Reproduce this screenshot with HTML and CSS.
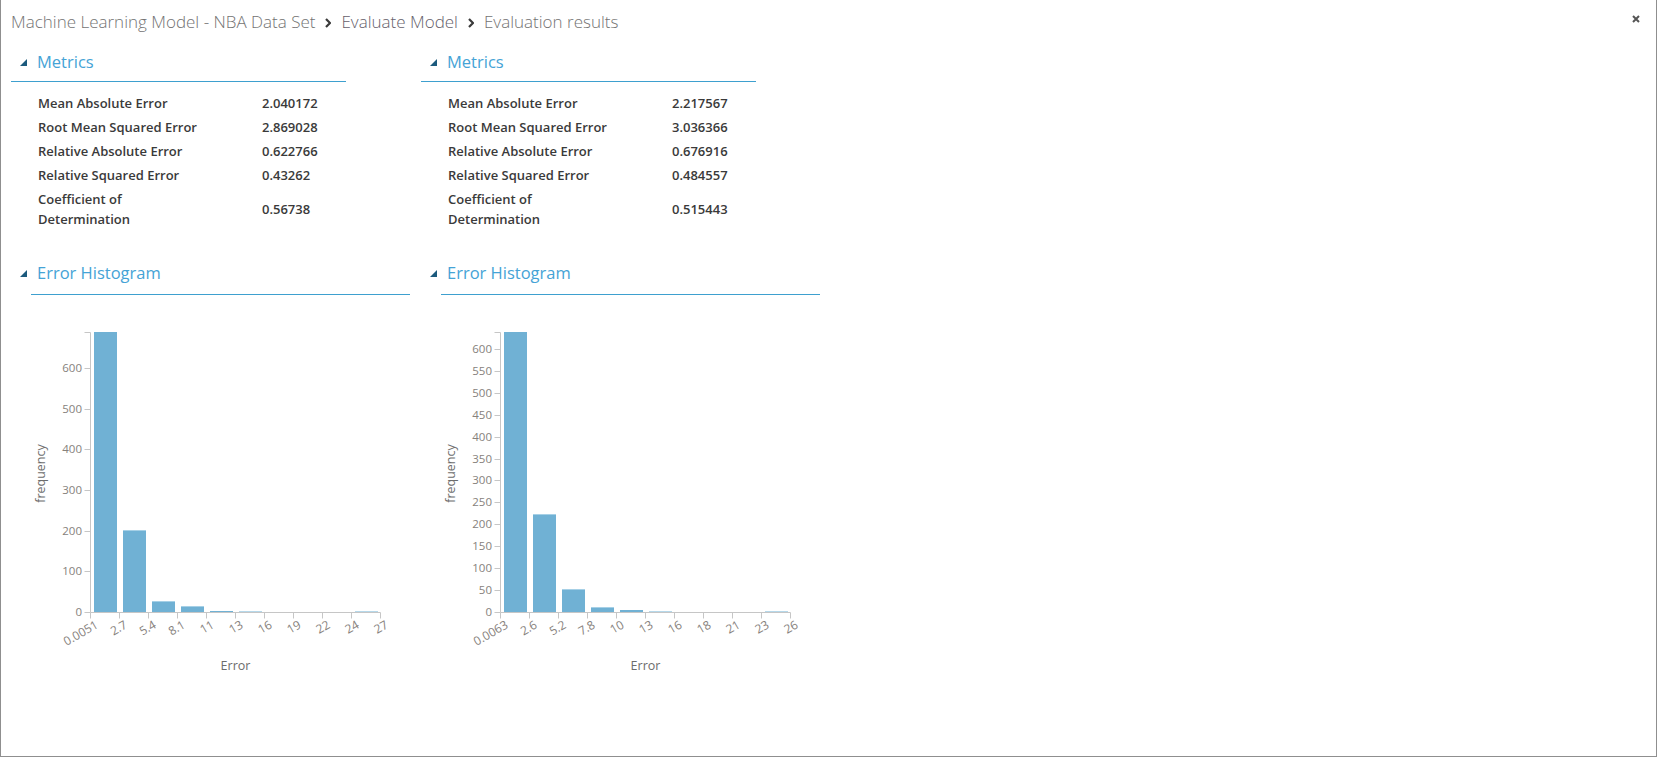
FILE: index.html
```html
<!DOCTYPE html>
<html lang="en">
<head>
<meta charset="utf-8">
<title>Evaluation results</title>
<link rel="stylesheet" href="styles.css">
</head>
<body>
<header class="titlebar">
  <nav class="crumbs">
    <span class="crumb">Machine Learning Model - NBA Data Set</span>
    <svg class="chev" width="6" height="10" viewBox="0 0 6 10"><path d="M1 1 L5 5 L1 9" /></svg>
    <span class="crumb link">Evaluate Model</span>
    <svg class="chev" width="6" height="10" viewBox="0 0 6 10"><path d="M1 1 L5 5 L1 9" /></svg>
    <span class="crumb current">Evaluation results</span>
  </nav>
  <button class="close" aria-label="Close">
    <svg width="8" height="8" viewBox="0 0 8 8"><path d="M1 1 L7 7 M7 1 L1 7" /></svg>
  </button>
</header>

<main class="panels">
  <section class="panel">
    <div class="sec-head metrics-head">
      <svg class="tri" width="7" height="7" viewBox="0 0 7 7"><path d="M7 0 L7 7 L0 7 Z"/></svg>
      <span class="sec-title">Metrics</span>
    </div>
    <dl class="metrics">
      <dt>Mean Absolute Error</dt><dd>2.040172</dd>
      <dt>Root Mean Squared Error</dt><dd>2.869028</dd>
      <dt>Relative Absolute Error</dt><dd>0.622766</dd>
      <dt>Relative Squared Error</dt><dd>0.43262</dd>
      <dt>Coefficient of Determination</dt><dd>0.56738</dd>
    </dl>
    <div class="sec-head hist-head">
      <svg class="tri" width="7" height="7" viewBox="0 0 7 7"><path d="M7 0 L7 7 L0 7 Z"/></svg>
      <span class="sec-title">Error Histogram</span>
    </div>
    <svg class="chart" width="410" height="390" viewBox="0 0 410 390">
      <g class="bars">
        <rect x="94" y="37" width="23" height="280"/>
        <rect x="123" y="235" width="23" height="82"/>
        <rect x="152" y="306" width="23" height="11"/>
        <rect x="181" y="311" width="23" height="6"/>
        <rect x="210" y="316" width="23" height="1"/>
        <rect class="faint" x="239" y="316" width="23" height="1"/>
        <rect class="faint" x="355" y="316" width="23" height="1"/>
      </g>
      <g class="bar-tops">
        <rect x="123" y="235" width="23" height="1"/>
        <rect x="152" y="306" width="23" height="1"/>
        <rect x="181" y="311" width="23" height="1"/>
      </g>
      <path class="axis" d="M84.5 37.5 H90.5 V317.5 H84.5"/>
      <path class="axis" d="M90.5 323.5 V317.5 H380.5 V323.5"/>
      <g class="axis">
        <path d="M84.5 276.5 H90.5 M84.5 236.5 H90.5 M84.5 195.5 H90.5 M84.5 154.5 H90.5 M84.5 114.5 H90.5 M84.5 73.5 H90.5"/>
        <path d="M119.5 317.5 V323.5 M148.5 317.5 V323.5 M177.5 317.5 V323.5 M206.5 317.5 V323.5 M235.5 317.5 V323.5 M264.5 317.5 V323.5 M293.5 317.5 V323.5 M322.5 317.5 V323.5 M351.5 317.5 V323.5"/>
      </g>
      <g class="ylabels">
        <text x="82" y="317.5" dy="0.34em">0</text>
        <text x="82" y="276.5" dy="0.34em">100</text>
        <text x="82" y="236.5" dy="0.34em">200</text>
        <text x="82" y="195.5" dy="0.34em">300</text>
        <text x="82" y="154.5" dy="0.34em">400</text>
        <text x="82" y="114.5" dy="0.34em">500</text>
        <text x="82" y="73.5" dy="0.34em">600</text>
      </g>
      <g class="xlabels">
        <text transform="translate(90.5 317.5) rotate(-30)" y="17">0.0051</text>
        <text transform="translate(119.5 317.5) rotate(-30)" y="17">2.7</text>
        <text transform="translate(148.5 317.5) rotate(-30)" y="17">5.4</text>
        <text transform="translate(177.5 317.5) rotate(-30)" y="17">8.1</text>
        <text transform="translate(206.5 317.5) rotate(-30)" y="17">11</text>
        <text transform="translate(235.5 317.5) rotate(-30)" y="17">13</text>
        <text transform="translate(264.5 317.5) rotate(-30)" y="17">16</text>
        <text transform="translate(293.5 317.5) rotate(-30)" y="17">19</text>
        <text transform="translate(322.5 317.5) rotate(-30)" y="17">22</text>
        <text transform="translate(351.5 317.5) rotate(-30)" y="17">24</text>
        <text transform="translate(380.5 317.5) rotate(-30)" y="17">27</text>
      </g>
      <text class="axis-title" x="235.5" y="375" text-anchor="middle">Error</text>
      <text class="axis-title" transform="translate(45 178.5) rotate(-90)" text-anchor="middle">frequency</text>
    </svg>
  </section>

  <section class="panel">
    <div class="sec-head metrics-head">
      <svg class="tri" width="7" height="7" viewBox="0 0 7 7"><path d="M7 0 L7 7 L0 7 Z"/></svg>
      <span class="sec-title">Metrics</span>
    </div>
    <dl class="metrics">
      <dt>Mean Absolute Error</dt><dd>2.217567</dd>
      <dt>Root Mean Squared Error</dt><dd>3.036366</dd>
      <dt>Relative Absolute Error</dt><dd>0.676916</dd>
      <dt>Relative Squared Error</dt><dd>0.484557</dd>
      <dt>Coefficient of Determination</dt><dd>0.515443</dd>
    </dl>
    <div class="sec-head hist-head">
      <svg class="tri" width="7" height="7" viewBox="0 0 7 7"><path d="M7 0 L7 7 L0 7 Z"/></svg>
      <span class="sec-title">Error Histogram</span>
    </div>
    <svg class="chart" width="410" height="390" viewBox="0 0 410 390">
      <g class="bars">
        <rect x="94" y="37" width="23" height="280"/>
        <rect x="123" y="219" width="23" height="98"/>
        <rect x="152" y="294" width="23" height="23"/>
        <rect x="181" y="312" width="23" height="5"/>
        <rect x="210" y="315" width="23" height="2"/>
        <rect class="faint" x="239" y="316" width="23" height="1"/>
        <rect class="faint" x="355" y="316" width="23" height="1"/>
      </g>
      <g class="bar-tops">
        <rect x="123" y="219" width="23" height="1"/>
        <rect x="152" y="294" width="23" height="1"/>
        <rect x="181" y="312" width="23" height="1"/>
      </g>
      <path class="axis" d="M84.5 37.5 H90.5 V317.5 H84.5"/>
      <path class="axis" d="M90.5 323.5 V317.5 H380.5 V323.5"/>
      <g class="axis">
        <path d="M84.5 295.5 H90.5 M84.5 273.5 H90.5 M84.5 251.5 H90.5 M84.5 229.5 H90.5 M84.5 207.5 H90.5 M84.5 185.5 H90.5 M84.5 164.5 H90.5 M84.5 142.5 H90.5 M84.5 120.5 H90.5 M84.5 98.5 H90.5 M84.5 76.5 H90.5 M84.5 54.5 H90.5"/>
        <path d="M119.5 317.5 V323.5 M148.5 317.5 V323.5 M177.5 317.5 V323.5 M206.5 317.5 V323.5 M235.5 317.5 V323.5 M264.5 317.5 V323.5 M293.5 317.5 V323.5 M322.5 317.5 V323.5 M351.5 317.5 V323.5"/>
      </g>
      <g class="ylabels">
        <text x="82" y="317.5" dy="0.34em">0</text>
        <text x="82" y="295.5" dy="0.34em">50</text>
        <text x="82" y="273.5" dy="0.34em">100</text>
        <text x="82" y="251.5" dy="0.34em">150</text>
        <text x="82" y="229.5" dy="0.34em">200</text>
        <text x="82" y="207.5" dy="0.34em">250</text>
        <text x="82" y="185.5" dy="0.34em">300</text>
        <text x="82" y="164.5" dy="0.34em">350</text>
        <text x="82" y="142.5" dy="0.34em">400</text>
        <text x="82" y="120.5" dy="0.34em">450</text>
        <text x="82" y="98.5" dy="0.34em">500</text>
        <text x="82" y="76.5" dy="0.34em">550</text>
        <text x="82" y="54.5" dy="0.34em">600</text>
      </g>
      <g class="xlabels">
        <text transform="translate(90.5 317.5) rotate(-30)" y="17">0.0063</text>
        <text transform="translate(119.5 317.5) rotate(-30)" y="17">2.6</text>
        <text transform="translate(148.5 317.5) rotate(-30)" y="17">5.2</text>
        <text transform="translate(177.5 317.5) rotate(-30)" y="17">7.8</text>
        <text transform="translate(206.5 317.5) rotate(-30)" y="17">10</text>
        <text transform="translate(235.5 317.5) rotate(-30)" y="17">13</text>
        <text transform="translate(264.5 317.5) rotate(-30)" y="17">16</text>
        <text transform="translate(293.5 317.5) rotate(-30)" y="17">18</text>
        <text transform="translate(322.5 317.5) rotate(-30)" y="17">21</text>
        <text transform="translate(351.5 317.5) rotate(-30)" y="17">23</text>
        <text transform="translate(380.5 317.5) rotate(-30)" y="17">26</text>
      </g>
      <text class="axis-title" x="235.5" y="375" text-anchor="middle">Error</text>
      <text class="axis-title" transform="translate(45 178.5) rotate(-90)" text-anchor="middle">frequency</text>
    </svg>
  </section>
</main>
</body>
</html>
```

FILE: styles.css
```css
html, body {
  margin: 0;
  padding: 0;
  background: #ffffff;
}

body {
  height: 757px;
  box-sizing: border-box;
  font-family: "Open Sans", "Noto Sans", sans-serif;
  color: #333333;
  box-shadow: inset 1px 0 0 #8f8f8f, inset -1px 0 0 #8f8f8f, inset 0 -1px 0 #8f8f8f;
  overflow: hidden;
}

.titlebar {
  height: 44px;
  box-sizing: border-box;
  padding: 10px 17px 0 11px;
  display: flex;
  justify-content: space-between;
  align-items: flex-start;
}

.crumbs {
  display: flex;
  align-items: center;
  font-size: 17px;
  font-weight: 300;
  line-height: 24px;
  color: #737373;
  white-space: nowrap;
}

.crumb.link {
  color: #665f6c;
}

.chev {
  margin: 1px 10px 0 10px;
}

.chev path {
  fill: none;
  stroke: #3a3a3a;
  stroke-width: 2.2;
}

.close {
  margin-top: 5px;
  padding: 0;
  border: 0;
  background: none;
  width: 8px;
  height: 8px;
  display: block;
}

.close svg {
  display: block;
}

.close path {
  stroke: #555555;
  stroke-width: 2;
  fill: none;
}

.panels {
  display: grid;
  grid-template-columns: 410px 410px;
  align-items: start;
}

.panel {
  display: flex;
  flex-direction: column;
}

.sec-head {
  display: flex;
  align-items: center;
  box-sizing: border-box;
  height: 38px;
  padding: 6px 0 7px 0;
  border-bottom: 1px solid #3ea0cf;
}

.tri {
  flex: none;
  display: block;
}

.tri path {
  fill: #1c5a7d;
}

.sec-title {
  font-size: 16.5px;
  line-height: 24px;
  color: #45a3d6;
  margin-left: 10px;
}

.metrics-head {
  margin-left: 11px;
  width: 335px;
}

.metrics-head .tri {
  margin-left: 9px;
  margin-top: 1px;
}

.hist-head {
  margin-top: 26px;
  margin-left: 31px;
  width: 379px;
  padding: 4px 0 9px 0;
}

.hist-head .tri {
  margin-left: -11px;
  margin-top: 1px;
}

.metrics {
  margin: 9px 0 0 38px;
  display: grid;
  grid-template-columns: 172px auto;
  column-gap: 52px;
  align-items: center;
  font-size: 13px;
  font-weight: 600;
  line-height: 20px;
  color: #3a3a3a;
}

.metrics dt,
.metrics dd {
  margin: 0;
  padding: 2px 0;
}

.chart {
  display: block;
  overflow: visible;
}

.bars rect {
  fill: #70b1d4;
}

.bars rect.faint {
  fill: #b6d8ea;
}

.bar-tops rect {
  fill: #a6d0e6;
}

.axis,
.axis path {
  fill: none;
  stroke: #c6c6c6;
  stroke-width: 1;
}

.ylabels text {
  font-family: "Open Sans", "Noto Sans", sans-serif;
  font-size: 11.5px;
  fill: #86817c;
  text-anchor: end;
}

.xlabels text {
  font-family: "Open Sans", "Noto Sans", sans-serif;
  font-size: 12px;
  fill: #86817c;
  text-anchor: end;
}

.axis-title {
  font-family: "Open Sans", "Noto Sans", sans-serif;
  font-size: 12.5px;
  fill: #6c6c6c;
}
```
